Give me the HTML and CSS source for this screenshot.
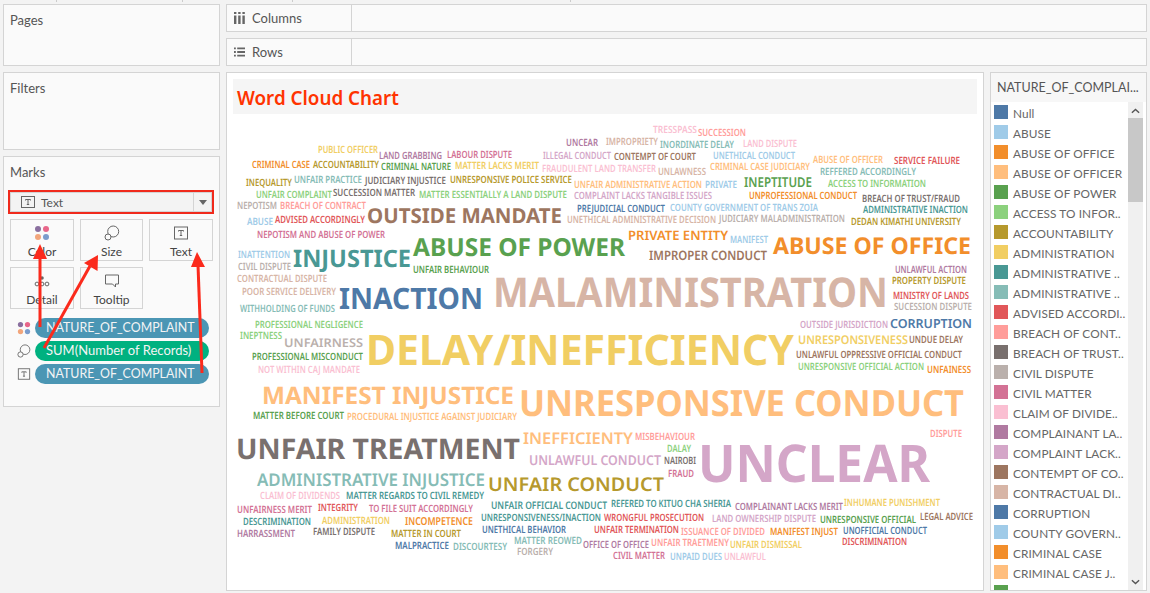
FILE: index.html
```html
<!DOCTYPE html>
<html lang="en">
<head>
<meta charset="utf-8">
<title>Word Cloud Chart</title>
<link rel="stylesheet" href="styles.css">
</head>
<body>
<div class="ticks"><i class="t1"></i><i class="t2"></i><i class="t3"></i><i class="t4"></i></div>
<div class="app">
  <aside class="left">
    <section class="card pages"><h2>Pages</h2></section>
    <section class="card filters"><h2>Filters</h2></section>
    <section class="card marks">
      <h2>Marks</h2>
      <div class="dropdown">
        <svg class="ico-t" viewBox="0 0 14 12"><rect x=".5" y=".5" width="13" height="11" fill="none" stroke="#666"/><path d="M4.5 3.5h5M7 3.5v5M5.8 8.5h2.4M4.5 3.5v1M9.5 3.5v1" fill="none" stroke="#666"/></svg>
        <span class="dd-label">Text</span>
        <span class="dd-arrow"></span>
      </div>
      <div class="btns">
        <div class="btn"><svg viewBox="0 0 16 16"><circle cx="4" cy="4" r="3" fill="#8a6f9f"/><circle cx="12" cy="4" r="3" fill="#e8668a"/><circle cx="4" cy="12" r="3" fill="#f2a57b"/><circle cx="12" cy="12" r="3" fill="#7b9ccc"/></svg><span>Color</span></div>
        <div class="btn"><svg viewBox="0 0 16 16"><circle cx="9.2" cy="6.5" r="5.500" fill="none" stroke="#666"/><circle cx="4" cy="12" r="3" fill="#fafafa" stroke="#666"/></svg><span>Size</span></div>
        <div class="btn"><svg viewBox="0 0 16 16"><rect x="1.5" y="2" width="13" height="12" fill="none" stroke="#666"/><path d="M5.5 5.5h5M8 5.5v5M6.8 10.5h2.4M5.5 5.5v1M10.5 5.5v1" fill="none" stroke="#666"/></svg><span>Text</span></div>
        <div class="btn"><svg viewBox="0 0 16 16"><circle cx="8" cy="5" r="1.8" fill="#666"/><circle cx="3" cy="11" r="1.9" fill="none" stroke="#666"/><circle cx="8" cy="11" r="1.9" fill="none" stroke="#666"/><circle cx="13" cy="11" r="1.9" fill="none" stroke="#666"/></svg><span>Detail</span></div>
        <div class="btn"><svg viewBox="0 0 16 16"><path d="M1.5 2h13v9h-3v3l-3-3h-7z" fill="none" stroke="#666"/></svg><span>Tooltip</span></div>
      </div>
      <div class="pill-row"><svg class="pill-ico" viewBox="0 0 16 16"><circle cx="4" cy="4" r="3" fill="#8a6f9f"/><circle cx="12" cy="4" r="3" fill="#e8668a"/><circle cx="4" cy="12" r="3" fill="#f2a57b"/><circle cx="12" cy="12" r="3" fill="#7b9ccc"/></svg><span class="pill">NATURE_OF_COMPLAINT</span></div>
      <div class="pill-row"><svg class="pill-ico" viewBox="0 0 16 16"><circle cx="9.2" cy="6.5" r="5.500" fill="none" stroke="#666"/><circle cx="4" cy="12" r="3" fill="#fafafa" stroke="#666"/></svg><span class="pill green">SUM(Number of Records)</span></div>
      <div class="pill-row"><svg class="pill-ico" viewBox="0 0 16 16"><rect x="1.5" y="2" width="13" height="12" fill="none" stroke="#666"/><path d="M5.5 5.5h5M8 5.5v5M6.8 10.5h2.4M5.5 5.5v1M10.5 5.5v1" fill="none" stroke="#666"/></svg><span class="pill">NATURE_OF_COMPLAINT</span></div>
    </section>
  </aside>
  <main class="right">
    <div class="shelf">
      <div class="shelf-head"><svg class="shelf-ico" viewBox="0 0 11 12"><path d="M0 0h2.4v2H0zM4.2 0h2.4v2H4.2zM8.4 0h2.4v2H8.4zM0 3.5h2.4V12H0zM4.2 3.5h2.4V12H4.2zM8.4 3.5h2.4V12H8.4z" fill="#666"/></svg><span>Columns</span></div>
    </div>
    <div class="shelf">
      <div class="shelf-head"><svg class="shelf-ico" viewBox="0 0 12 10"><path d="M0 0h2v2H0zM3.5 0H12v2H3.5zM0 4h2v2H0zM3.5 4H12v2H3.500zM0 8h2v2H0zM3.5 8H12v2H3.5z" fill="#666"/></svg><span>Rows</span></div>
    </div>
    <div class="work">
      <section class="chart">
        <h1 class="chart-title">Word Cloud Chart</h1>
        <svg class="cloud" viewBox="227 114 756 476" width="756" height="476">
          <text class="w lp" x="653" y="133" font-size="10" textLength="44" lengthAdjust="spacingAndGlyphs">TRESSPASS</text>
          <text class="w lr" x="698" y="136" font-size="10" textLength="48" lengthAdjust="spacingAndGlyphs">SUCCESSION</text>
          <text class="w pu" x="566" y="146" font-size="10" textLength="32" lengthAdjust="spacingAndGlyphs">UNCEAR</text>
          <text class="w lbr" x="606" y="145" font-size="10" textLength="52" lengthAdjust="spacingAndGlyphs">IMPROPRIETY</text>
          <text class="w lt" x="660" y="148" font-size="10" textLength="74" lengthAdjust="spacingAndGlyphs">INORDINATE DELAY</text>
          <text class="w lp" x="743" y="147" font-size="10" textLength="54" lengthAdjust="spacingAndGlyphs">LAND DISPUTE</text>
          <text class="w y" x="318" y="153" font-size="10" textLength="60" lengthAdjust="spacingAndGlyphs">PUBLIC OFFICER</text>
          <text class="w pu" x="379" y="159" font-size="10" textLength="63" lengthAdjust="spacingAndGlyphs">LAND GRABBING</text>
          <text class="w p" x="447" y="158" font-size="10" textLength="65" lengthAdjust="spacingAndGlyphs">LABOUR DISPUTE</text>
          <text class="w lpu" x="543" y="159" font-size="10" textLength="68" lengthAdjust="spacingAndGlyphs">ILLEGAL CONDUCT</text>
          <text class="w br" x="614" y="160" font-size="10" textLength="82" lengthAdjust="spacingAndGlyphs">CONTEMPT OF COURT</text>
          <text class="w lb" x="713" y="159" font-size="10" textLength="82" lengthAdjust="spacingAndGlyphs">UNETHICAL CONDUCT</text>
          <text class="w lo" x="813" y="163" font-size="10" textLength="70" lengthAdjust="spacingAndGlyphs">ABUSE OF OFFICER</text>
          <text class="w r" x="894" y="164" font-size="10" textLength="66" lengthAdjust="spacingAndGlyphs">SERVICE FAILURE</text>
          <text class="w o" x="252" y="168" font-size="10" textLength="58" lengthAdjust="spacingAndGlyphs">CRIMINAL CASE</text>
          <text class="w ol" x="313" y="168" font-size="10" textLength="66" lengthAdjust="spacingAndGlyphs">ACCOUNTABILITY</text>
          <text class="w g" x="381" y="170" font-size="10" textLength="70" lengthAdjust="spacingAndGlyphs">CRIMINAL NATURE</text>
          <text class="w y" x="455" y="169" font-size="10" textLength="84" lengthAdjust="spacingAndGlyphs">MATTER LACKS MERIT</text>
          <text class="w lp" x="542" y="172" font-size="10" textLength="114" lengthAdjust="spacingAndGlyphs">FRAUDULENT LAND TRANSFER</text>
          <text class="w lo" x="710" y="170" font-size="10" textLength="100" lengthAdjust="spacingAndGlyphs">CRIMINAL CASE JUDICIARY</text>
          <text class="w lbr" x="658" y="175" font-size="10" textLength="48" lengthAdjust="spacingAndGlyphs">UNLAWNESS</text>
          <text class="w lt" x="820" y="175" font-size="10" textLength="96" lengthAdjust="spacingAndGlyphs">REFFERED ACCORDINGLY</text>
          <text class="w ol" x="246" y="186" font-size="10" textLength="46" lengthAdjust="spacingAndGlyphs">INEQUALITY</text>
          <text class="w lt" x="294" y="183" font-size="10" textLength="68" lengthAdjust="spacingAndGlyphs">UNFAIR PRACTICE</text>
          <text class="w gr" x="365" y="184" font-size="10" textLength="81" lengthAdjust="spacingAndGlyphs">JUDICIARY INJUSTICE</text>
          <text class="w ol" x="450" y="183" font-size="10" textLength="122" lengthAdjust="spacingAndGlyphs">UNRESPONSIVE POLICE SERVICE</text>
          <text class="w lo" x="574" y="188" font-size="10" textLength="128" lengthAdjust="spacingAndGlyphs">UNFAIR ADMINISTRATIVE ACTION</text>
          <text class="w lb" x="705" y="188" font-size="10" textLength="32" lengthAdjust="spacingAndGlyphs">PRIVATE</text>
          <text class="w g" x="744" y="187" font-size="13.5" textLength="68" lengthAdjust="spacingAndGlyphs">INEPTITUDE</text>
          <text class="w lg" x="828" y="187" font-size="10" textLength="98" lengthAdjust="spacingAndGlyphs">ACCESS TO INFORMATION</text>
          <text class="w lg" x="256" y="198" font-size="10" textLength="76" lengthAdjust="spacingAndGlyphs">UNFAIR COMPLAINT</text>
          <text class="w gr" x="333" y="196" font-size="10" textLength="82" lengthAdjust="spacingAndGlyphs">SUCCESSION MATTER</text>
          <text class="w lg" x="419" y="198" font-size="10" textLength="148" lengthAdjust="spacingAndGlyphs">MATTER ESSENTIALLY A LAND DISPUTE</text>
          <text class="w lpu" x="574" y="199" font-size="10" textLength="138" lengthAdjust="spacingAndGlyphs">COMPLAINT LACKS TANGIBLE ISSUES</text>
          <text class="w o" x="749" y="199" font-size="10" textLength="108" lengthAdjust="spacingAndGlyphs">UNPROFESSIONAL CONDUCT</text>
          <text class="w gr" x="862" y="202" font-size="10" textLength="98" lengthAdjust="spacingAndGlyphs">BREACH OF TRUST/FRAUD</text>
          <text class="w lgr" x="237" y="209" font-size="10" textLength="40" lengthAdjust="spacingAndGlyphs">NEPOTISM</text>
          <text class="w lr" x="280" y="209" font-size="10" textLength="86" lengthAdjust="spacingAndGlyphs">BREACH OF CONTRACT</text>
          <text class="w b" x="577" y="212" font-size="10" textLength="88" lengthAdjust="spacingAndGlyphs">PREJUDICIAL CONDUCT</text>
          <text class="w lb" x="670" y="211" font-size="10" textLength="148" lengthAdjust="spacingAndGlyphs">COUNTY GOVERNMENT OF TRANS ZOIA</text>
          <text class="w t" x="863" y="213" font-size="10" textLength="105" lengthAdjust="spacingAndGlyphs">ADMINISTRATIVE INACTION</text>
          <text class="w big br" x="367" y="223" font-size="20.5" textLength="195" lengthAdjust="spacingAndGlyphs">OUTSIDE MANDATE</text>
          <text class="w lb" x="247" y="225" font-size="10" textLength="26" lengthAdjust="spacingAndGlyphs">ABUSE</text>
          <text class="w r" x="275" y="223" font-size="10" textLength="90" lengthAdjust="spacingAndGlyphs">ADVISED ACCORDINGLY</text>
          <text class="w lbr" x="567" y="223" font-size="10" textLength="149" lengthAdjust="spacingAndGlyphs">UNETHICAL ADMINISTRATIVE DECISION</text>
          <text class="w lgr" x="719" y="222" font-size="10" textLength="126" lengthAdjust="spacingAndGlyphs">JUDICIARY MALADMINISTRATION</text>
          <text class="w ol" x="851" y="225" font-size="10" textLength="110" lengthAdjust="spacingAndGlyphs">DEDAN KIMATHI UNIVERSITY</text>
          <text class="w p" x="257" y="238" font-size="10" textLength="128" lengthAdjust="spacingAndGlyphs">NEPOTISM AND ABUSE OF POWER</text>
          <text class="w o" x="628" y="240" font-size="13" textLength="100" lengthAdjust="spacingAndGlyphs">PRIVATE ENTITY</text>
          <text class="w lb" x="730" y="243" font-size="10" textLength="38" lengthAdjust="spacingAndGlyphs">MANIFEST</text>
          <text class="w big o" x="773" y="254" font-size="23" textLength="198" lengthAdjust="spacingAndGlyphs">ABUSE OF OFFICE</text>
          <text class="w br" x="649" y="260" font-size="13" textLength="118" lengthAdjust="spacingAndGlyphs">IMPROPER CONDUCT</text>
          <text class="w big g" x="413" y="256" font-size="24.8" textLength="212" lengthAdjust="spacingAndGlyphs">ABUSE OF POWER</text>
          <text class="w lb" x="238" y="258" font-size="10" textLength="52" lengthAdjust="spacingAndGlyphs">INATTENTION</text>
          <text class="w big t" x="293" y="267" font-size="24" textLength="118" lengthAdjust="spacingAndGlyphs">INJUSTICE</text>
          <text class="w lgr" x="238" y="270" font-size="10" textLength="53" lengthAdjust="spacingAndGlyphs">CIVIL DISPUTE</text>
          <text class="w g" x="413" y="273" font-size="10" textLength="76" lengthAdjust="spacingAndGlyphs">UNFAIR BEHAVIOUR</text>
          <text class="w pu" x="895" y="273" font-size="10" textLength="72" lengthAdjust="spacingAndGlyphs">UNLAWFUL ACTION</text>
          <text class="w lbr" x="237" y="282" font-size="10" textLength="90" lengthAdjust="spacingAndGlyphs">CONTRACTUAL DISPUTE</text>
          <text class="w ol" x="892" y="284" font-size="10" textLength="74" lengthAdjust="spacingAndGlyphs">PROPERTY DISPUTE</text>
          <text class="w lbr" x="242" y="295" font-size="10" textLength="94" lengthAdjust="spacingAndGlyphs">POOR SERVICE DELIVERY</text>
          <text class="w r" x="893" y="299" font-size="10" textLength="76" lengthAdjust="spacingAndGlyphs">MINISTRY OF LANDS</text>
          <text class="w big b" x="339" y="309" font-size="29.5" textLength="144" lengthAdjust="spacingAndGlyphs">INACTION</text>
          <text class="w big lbr" x="493" y="307" font-size="41" textLength="395" lengthAdjust="spacingAndGlyphs">MALAMINISTRATION</text>
          <text class="w lgr" x="894" y="310" font-size="10" textLength="78" lengthAdjust="spacingAndGlyphs">SUCESSION DISPUTE</text>
          <text class="w lt" x="240" y="312" font-size="10" textLength="95" lengthAdjust="spacingAndGlyphs">WITHHOLDING OF FUNDS</text>
          <text class="w lpu" x="800" y="328" font-size="10" textLength="88" lengthAdjust="spacingAndGlyphs">OUTSIDE JURISDICTION</text>
          <text class="w b" x="890" y="328" font-size="12.5" textLength="82" lengthAdjust="spacingAndGlyphs">CORRUPTION</text>
          <text class="w lg" x="255" y="328" font-size="10" textLength="108" lengthAdjust="spacingAndGlyphs">PROFESSIONAL NEGLIGENCE</text>
          <text class="w lg" x="240" y="339" font-size="10" textLength="42" lengthAdjust="spacingAndGlyphs">INEPTNESS</text>
          <text class="w lgr" x="284" y="347" font-size="12" textLength="79" lengthAdjust="spacingAndGlyphs">UNFAIRNESS</text>
          <text class="w y" x="798" y="344" font-size="12" textLength="110" lengthAdjust="spacingAndGlyphs">UNRESPONSIVENESS</text>
          <text class="w br" x="909" y="343" font-size="10" textLength="54" lengthAdjust="spacingAndGlyphs">UNDUE DELAY</text>
          <text class="w big y" x="366" y="364.5" font-size="42" textLength="428" lengthAdjust="spacingAndGlyphs">DELAY/INEFFICIENCY</text>
          <text class="w g" x="252" y="360" font-size="10" textLength="111" lengthAdjust="spacingAndGlyphs">PROFESSIONAL MISCONDUCT</text>
          <text class="w br" x="796" y="358" font-size="10" textLength="166" lengthAdjust="spacingAndGlyphs">UNLAWFUL OPPRESSIVE OFFICIAL CONDUCT</text>
          <text class="w lg" x="798" y="370" font-size="10" textLength="126" lengthAdjust="spacingAndGlyphs">UNRESPONSIVE OFFICIAL ACTION</text>
          <text class="w o" x="927" y="373" font-size="10" textLength="44" lengthAdjust="spacingAndGlyphs">UNFAINESS</text>
          <text class="w lp" x="258" y="373" font-size="10" textLength="102" lengthAdjust="spacingAndGlyphs">NOT WITHIN CAJ MANDATE</text>
          <text class="w big lo" x="262" y="404" font-size="24" textLength="252" lengthAdjust="spacingAndGlyphs">MANIFEST INJUSTICE</text>
          <text class="w big lo" x="519" y="416" font-size="36" textLength="445" lengthAdjust="spacingAndGlyphs">UNRESPONSIVE CONDUCT</text>
          <text class="w g" x="253" y="419" font-size="10" textLength="91" lengthAdjust="spacingAndGlyphs">MATTER BEFORE COURT</text>
          <text class="w lo" x="347" y="420" font-size="10" textLength="170" lengthAdjust="spacingAndGlyphs">PROCEDURAL INJUSTICE AGAINST JUDICIARY</text>
          <text class="w big gr" x="236" y="459" font-size="28.5" textLength="284" lengthAdjust="spacingAndGlyphs">UNFAIR TREATMENT</text>
          <text class="w lo" x="523" y="444" font-size="16" textLength="110" lengthAdjust="spacingAndGlyphs">INEFFICIENTY</text>
          <text class="w lr" x="635" y="440" font-size="10" textLength="60" lengthAdjust="spacingAndGlyphs">MISBEHAVIOUR</text>
          <text class="w lr" x="930" y="437" font-size="10" textLength="32" lengthAdjust="spacingAndGlyphs">DISPUTE</text>
          <text class="w lg" x="667" y="452" font-size="10" textLength="24" lengthAdjust="spacingAndGlyphs">DALAY</text>
          <text class="w lpu" x="529" y="465" font-size="13.5" textLength="132" lengthAdjust="spacingAndGlyphs">UNLAWFUL CONDUCT</text>
          <text class="w gr" x="664" y="464" font-size="10" textLength="32" lengthAdjust="spacingAndGlyphs">NAIROBI</text>
          <text class="w p" x="668" y="477" font-size="10" textLength="26" lengthAdjust="spacingAndGlyphs">FRAUD</text>
          <text class="w big lpu" x="698" y="482" font-size="52" textLength="232" lengthAdjust="spacingAndGlyphs">UNCLEAR</text>
          <text class="w lt" x="257" y="486" font-size="17.5" textLength="228" lengthAdjust="spacingAndGlyphs">ADMINISTRATIVE INJUSTICE</text>
          <text class="w ol" x="488" y="491" font-size="19" textLength="176" lengthAdjust="spacingAndGlyphs">UNFAIR CONDUCT</text>
          <text class="w lp" x="260" y="499" font-size="10" textLength="80" lengthAdjust="spacingAndGlyphs">CLAIM OF DIVIDENDS</text>
          <text class="w t" x="346" y="499" font-size="10" textLength="138" lengthAdjust="spacingAndGlyphs">MATTER REGARDS TO CIVIL REMEDY</text>
          <text class="w t" x="491" y="509" font-size="10.5" textLength="116" lengthAdjust="spacingAndGlyphs">UNFAIR OFFICIAL CONDUCT</text>
          <text class="w t" x="611" y="507" font-size="10" textLength="120" lengthAdjust="spacingAndGlyphs">REFERED TO KITUO CHA SHERIA</text>
          <text class="w pu" x="735" y="510" font-size="10" textLength="108" lengthAdjust="spacingAndGlyphs">COMPLAINANT LACKS MERIT</text>
          <text class="w y" x="844" y="506" font-size="10" textLength="96" lengthAdjust="spacingAndGlyphs">INHUMANE PUNISHMENT</text>
          <text class="w p" x="237" y="513" font-size="10" textLength="75" lengthAdjust="spacingAndGlyphs">UNFAIRNESS MERIT</text>
          <text class="w r" x="318" y="511" font-size="10" textLength="40" lengthAdjust="spacingAndGlyphs">INTEGRITY</text>
          <text class="w p" x="369" y="512" font-size="10" textLength="104" lengthAdjust="spacingAndGlyphs">TO FILE SUIT ACCORDINGLY</text>
          <text class="w t" x="243" y="525" font-size="10" textLength="68" lengthAdjust="spacingAndGlyphs">DESCRIMINATION</text>
          <text class="w y" x="322" y="524" font-size="10" textLength="68" lengthAdjust="spacingAndGlyphs">ADMINISTRATION</text>
          <text class="w o" x="405" y="525" font-size="11" textLength="68" lengthAdjust="spacingAndGlyphs">INCOMPETENCE</text>
          <text class="w t" x="481" y="521" font-size="10" textLength="120" lengthAdjust="spacingAndGlyphs">UNRESPONSIVENESS/INACTION</text>
          <text class="w r" x="604" y="521" font-size="10" textLength="100" lengthAdjust="spacingAndGlyphs">WRONGFUL PROSECUTION</text>
          <text class="w lpu" x="712" y="522" font-size="10" textLength="104" lengthAdjust="spacingAndGlyphs">LAND OWNERSHIP DISPUTE</text>
          <text class="w g" x="820" y="523" font-size="10" textLength="96" lengthAdjust="spacingAndGlyphs">UNRESPONSIVE OFFICIAL</text>
          <text class="w br" x="920" y="520" font-size="10" textLength="53" lengthAdjust="spacingAndGlyphs">LEGAL ADVICE</text>
          <text class="w pu" x="237" y="537" font-size="10" textLength="58" lengthAdjust="spacingAndGlyphs">HARRASSMENT</text>
          <text class="w gr" x="313" y="535" font-size="10" textLength="62" lengthAdjust="spacingAndGlyphs">FAMILY DISPUTE</text>
          <text class="w ol" x="391" y="537" font-size="10" textLength="70" lengthAdjust="spacingAndGlyphs">MATTER IN COURT</text>
          <text class="w b" x="482" y="533" font-size="10" textLength="84" lengthAdjust="spacingAndGlyphs">UNETHICAL BEHAVIOR</text>
          <text class="w r" x="594" y="533" font-size="10" textLength="85" lengthAdjust="spacingAndGlyphs">UNFAIR TERMINATION</text>
          <text class="w lr" x="681" y="535" font-size="10" textLength="84" lengthAdjust="spacingAndGlyphs">ISSUANCE OF DIVIDED</text>
          <text class="w o" x="770" y="535" font-size="10" textLength="68" lengthAdjust="spacingAndGlyphs">MANIFEST INJUST</text>
          <text class="w b" x="843" y="534" font-size="10" textLength="84" lengthAdjust="spacingAndGlyphs">UNOFFICIAL CONDUCT</text>
          <text class="w r" x="842" y="545" font-size="10" textLength="65" lengthAdjust="spacingAndGlyphs">DISCRIMINATION</text>
          <text class="w lt" x="514" y="544" font-size="10" textLength="68" lengthAdjust="spacingAndGlyphs">MATTER REOWED</text>
          <text class="w b" x="395" y="549" font-size="10" textLength="54" lengthAdjust="spacingAndGlyphs">MALPRACTICE</text>
          <text class="w lt" x="453" y="550" font-size="10" textLength="54" lengthAdjust="spacingAndGlyphs">DISCOURTESY</text>
          <text class="w lgr" x="517" y="555" font-size="10" textLength="36" lengthAdjust="spacingAndGlyphs">FORGERY</text>
          <text class="w pu" x="583" y="548" font-size="10" textLength="66" lengthAdjust="spacingAndGlyphs">OFFICE OF OFFICE</text>
          <text class="w lr" x="651" y="546" font-size="10" textLength="78" lengthAdjust="spacingAndGlyphs">UNFAIR TRAETMENY</text>
          <text class="w y" x="730" y="548" font-size="10" textLength="72" lengthAdjust="spacingAndGlyphs">UNFAIR DISMISSAL</text>
          <text class="w p" x="613" y="559" font-size="10" textLength="52" lengthAdjust="spacingAndGlyphs">CIVIL MATTER</text>
          <text class="w lb" x="670" y="560" font-size="10" textLength="52" lengthAdjust="spacingAndGlyphs">UNPAID DUES</text>
          <text class="w lp" x="724" y="560" font-size="10" textLength="42" lengthAdjust="spacingAndGlyphs">UNLAWFUL</text>
        </svg>
      </section>
      <aside class="legend">
        <h3 class="legend-title">NATURE_OF_COMPLAI...</h3>
        <div class="legend-body">
          <ul class="legend-list">
            <li><i class="sw s-b"></i>Null</li>
            <li><i class="sw s-lb"></i>ABUSE</li>
            <li><i class="sw s-o"></i>ABUSE OF OFFICE</li>
            <li><i class="sw s-lo"></i>ABUSE OF OFFICER</li>
            <li><i class="sw s-g"></i>ABUSE OF POWER</li>
            <li><i class="sw s-lg"></i>ACCESS TO INFOR..</li>
            <li><i class="sw s-ol"></i>ACCOUNTABILITY</li>
            <li><i class="sw s-y"></i>ADMINISTRATION</li>
            <li><i class="sw s-t"></i>ADMINISTRATIVE ..</li>
            <li><i class="sw s-lt"></i>ADMINISTRATIVE ..</li>
            <li><i class="sw s-r"></i>ADVISED ACCORDI..</li>
            <li><i class="sw s-lr"></i>BREACH OF CONT..</li>
            <li><i class="sw s-gr"></i>BREACH OF TRUST..</li>
            <li><i class="sw s-lgr"></i>CIVIL DISPUTE</li>
            <li><i class="sw s-p"></i>CIVIL MATTER</li>
            <li><i class="sw s-lp"></i>CLAIM OF DIVIDE..</li>
            <li><i class="sw s-pu"></i>COMPLAINANT LA..</li>
            <li><i class="sw s-lpu"></i>COMPLAINT LACK..</li>
            <li><i class="sw s-br"></i>CONTEMPT OF CO..</li>
            <li><i class="sw s-lbr"></i>CONTRACTUAL DI..</li>
            <li><i class="sw s-b"></i>CORRUPTION</li>
            <li><i class="sw s-lb"></i>COUNTY GOVERN..</li>
            <li><i class="sw s-o"></i>CRIMINAL CASE</li>
            <li><i class="sw s-lo"></i>CRIMINAL CASE J..</li>
            <li><i class="sw s-g"></i>CRIMINAL NATURE</li>
          </ul>
          <div class="scrollbar">
            <svg class="chev" viewBox="0 0 10 6"><path d="M1 5l4-3.6L9 5" fill="none" stroke="#555" stroke-width="1.6"/></svg>
            <div class="thumb"></div>
            <svg class="chev down" viewBox="0 0 10 6"><path d="M1 1l4 3.6L9 1" fill="none" stroke="#555" stroke-width="1.6"/></svg>
          </div>
        </div>
      </aside>
    </div>
  </main>
</div>
<svg class="arrows" viewBox="0 0 1150 593" width="1150" height="593">
  <path d="M40 327V256" class="a-line"/><path d="M40 244l7 15H33z" class="a-head"/>
  <path d="M44 348L90 266" class="a-line"/><path d="M98 255L97.500 271L84 263z" class="a-head"/>
  <path d="M202 373L198 265" class="a-line"/><path d="M197 252L205 267H191z" class="a-head"/>
</svg>
</body>
</html>
```

FILE: styles.css
```css
* { box-sizing: border-box; }
html, body { margin: 0; padding: 0; }
body {
  width: 1150px;
  height: 593px;
  overflow: hidden;
  position: relative;
  background: #f3f3f3;
  font-family: Lato, "Open Sans", sans-serif;
  color: #555;
}
.ticks { display: flex; height: 4px; }
.ticks i { display: block; height: 2px; border-right: 1px solid #ccc; }
.t1 { width: 57px; }
.t2 { width: 126px; }
.t3 { width: 110px; }
.t4 { width: 278px; }

.app { display: flex; gap: 6px; padding-left: 3px; }
.left { width: 217px; display: flex; flex-direction: column; gap: 6px; }
.right { width: 921px; display: flex; flex-direction: column; gap: 6px; }

.card { background: #fafafa; border: 1px solid #d4d4d4; padding: 7px 6px; }
.card h2 { margin: 0; font-size: 13px; font-weight: 400; color: #555; line-height: 16px; }
.pages { height: 62px; }
.filters { height: 78px; }
.marks { height: 251px; padding: 7px 6px 0; }

.dropdown {
  margin: 10px 0 0 -2px;
  height: 24px;
  width: 206px;
  display: flex;
  align-items: center;
  background: #f3f3f3;
  border: 2px solid #f02a1c;
  box-shadow: inset 0 0 0 1px #d4d4d4;
  padding-left: 11px;
}
.ico-t { width: 14px; height: 12px; }
.dd-label { margin-left: 6px; font-size: 12px; flex: 1; }
.dd-arrow {
  width: 19px; height: 18px;
  border-left: 1px solid #d4d4d4;
  position: relative;
}
.dd-arrow::after {
  content: "";
  position: absolute;
  left: 5px; top: 7px;
  border-left: 4px solid transparent;
  border-right: 4px solid transparent;
  border-top: 5px solid #666;
}
.btns {
  display: grid;
  grid-template-columns: 64px 63px 64px;
  column-gap: 6px;
  row-gap: 6px;
  margin-top: 5px;
}
.btn {
  height: 42px;
  border: 1px solid #d4d4d4;
  background: #fafafa;
  display: flex;
  flex-direction: column;
  align-items: center;
  padding-top: 5px;
}
.btn svg { width: 16px; height: 16px; }
.btn span { font-size: 12px; line-height: 14px; margin-top: 4px; color: #444; }

.pill-row { display: flex; align-items: center; height: 20px; margin-top: 3px; }
.btns + .pill-row { margin-top: 9px; }
.pill-ico { width: 14px; height: 14px; margin-left: 7px; margin-right: 4px; flex: none; }
.pill {
  width: 174px;
  height: 20px;
  border-radius: 10px;
  background: #4b96b4;
  color: #f4f4f4;
  font-size: 12.400px;
  line-height: 19px;
  padding-left: 11px;
  white-space: nowrap;
}
.pill.green { background: #00b180; font-size: 13px; }

.shelf { height: 28px; background: #fafafa; border: 1px solid #d4d4d4; display: flex; }
.shelf-head {
  width: 125px;
  border-right: 1px solid #d4d4d4;
  display: flex;
  align-items: center;
  padding-left: 7px;
  padding-bottom: 1px;
  font-size: 13px;
  color: #555;
}
.shelf-ico { width: 11px; height: 12px; margin-right: 7px; }

.work { display: flex; gap: 6px; height: 519px; }
.chart { width: 758px; background: #fff; border: 1px solid #d4d4d4; }
.chart-title {
  margin: 6px 6px 0;
  height: 35px;
  background: #f5f5f5;
  color: #ff3300;
  font: 600 18.800px/38px "Noto Sans", sans-serif;
  padding-left: 4px;
}
.cloud { display: block; }
.w { font-family: "Noto Sans", sans-serif; font-weight: 600; text-rendering: geometricPrecision; }
.big { font-weight: 700; }
.b { fill: #4e79a7; } .lb { fill: #a0cbe8; }
.o { fill: #f28e2b; } .lo { fill: #ffbe7d; }
.g { fill: #59a14f; } .lg { fill: #8cd17d; }
.ol { fill: #b6992d; } .y { fill: #f1ce63; }
.t { fill: #499894; } .lt { fill: #86bcb6; }
.r { fill: #e15759; } .lr { fill: #ff9d9a; }
.gr { fill: #79706e; } .lgr { fill: #bab0ac; }
.p { fill: #d37295; } .lp { fill: #fabfd2; }
.pu { fill: #b07aa1; } .lpu { fill: #d4a6c8; }
.br { fill: #9d7660; } .lbr { fill: #d7b5a6; }

.legend { width: 157px; background: #f7f7f7; border: 1px solid #d4d4d4; display: flex; flex-direction: column; overflow: hidden; }
.legend-title { margin: 0; height: 29px; font-size: 12.500px; font-weight: 400; line-height: 30px; padding-left: 6px; color: #555; white-space: nowrap; }
.legend-body { flex: 1; display: flex; background: #fff; min-height: 0; }
.legend-list { list-style: none; margin: 0; padding: 0 0 0 3px; width: 137px; overflow: hidden; }
.legend-list li { display: flex; align-items: center; height: 20px; padding-top: 2px; font-size: 11.800px; letter-spacing: .1px; color: #666; white-space: nowrap; }
.sw { width: 14px; height: 14px; margin: -2px 5px 0 0; flex: none; }
.s-b { background: #4e79a7; } .s-lb { background: #a0cbe8; }
.s-o { background: #f28e2b; } .s-lo { background: #ffbe7d; }
.s-g { background: #59a14f; } .s-lg { background: #8cd17d; }
.s-ol { background: #b6992d; } .s-y { background: #f1ce63; }
.s-t { background: #499894; } .s-lt { background: #86bcb6; }
.s-r { background: #e15759; } .s-lr { background: #ff9d9a; }
.s-gr { background: #79706e; } .s-lgr { background: #bab0ac; }
.s-p { background: #d37295; } .s-lp { background: #fabfd2; }
.s-pu { background: #b07aa1; } .s-lpu { background: #d4a6c8; }
.s-br { background: #9d7660; } .s-lbr { background: #d7b5a6; }
.scrollbar { width: 15px; background: #f0f0f0; display: flex; flex-direction: column; align-items: center; }
.chev { width: 9px; height: 6px; margin: 6px 0 4px; flex: none; }
.thumb { width: 15px; height: 84px; background: #c8c8c8; flex: none; }
.chev.down { margin: auto 0 5px; }

.arrows { position: absolute; left: 0; top: 0; pointer-events: none; }
.a-line { fill: none; stroke: #fb2a1c; stroke-width: 3; }
.a-head { fill: #fb2a1c; }
```
